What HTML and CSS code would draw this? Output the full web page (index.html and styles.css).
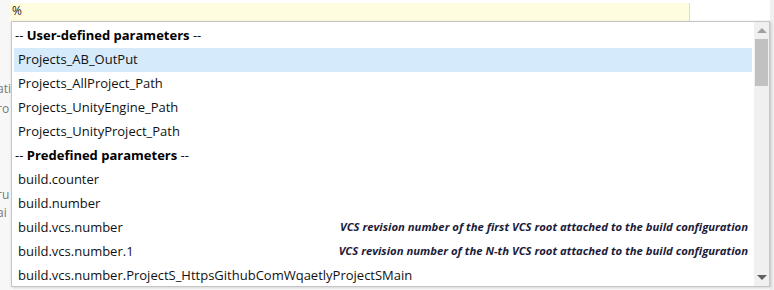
FILE: index.html
```html
<!DOCTYPE html>
<html>
<head>
<meta charset="utf-8">
<link rel="stylesheet" href="styles.css">
</head>
<body>
<div class="page">
  <div class="under">
    <div class="frag f1">ati</div>
    <div class="frag f2">ro</div>
    <div class="frag f3">ru</div>
    <div class="frag f4">ai</div>
  </div>
  <div class="inputbar">%</div>
  <div class="edge"></div>
  <div class="popup">
    <div class="list">
      <div class="row head">-- <b>User-defined parameters</b> --</div>
      <div class="row sel">Projects_AB_OutPut</div>
      <div class="row">Projects_AllProject_Path</div>
      <div class="row">Projects_UnityEngine_Path</div>
      <div class="row">Projects_UnityProject_Path</div>
      <div class="row head">-- <b>Predefined parameters</b> --</div>
      <div class="row">build.counter</div>
      <div class="row">build.number</div>
      <div class="row"><span>build.vcs.number</span><span class="desc">VCS revision number of the first VCS root attached to the build configuration</span></div>
      <div class="row"><span>build.vcs.number.1</span><span class="desc">VCS revision number of the N-th VCS root attached to the build configuration</span></div>
      <div class="row">build.vcs.number.ProjectS_HttpsGithubComWqaetlyProjectSMain</div>
    </div>
    <div class="scroll">
      <div class="arrow up"></div>
      <div class="track"><div class="thumb"></div></div>
      <div class="arrow down"></div>
    </div>
  </div>
</div>
</body>
</html>
```
FILE: styles.css
```css
* { box-sizing: border-box; }
html, body { margin: 0; padding: 0; background: #fff; }
body { width: 774px; height: 290px; overflow: hidden; font-family: "Open Sans", "Noto Sans", sans-serif; }
.page { position: relative; width: 774px; height: 290px; background: #fff; }
.under { position: absolute; left: 0; top: 0; width: 11px; height: 290px; background: #f7f7f7; overflow: hidden; }
.frag { position: absolute; left: -3px; font-size: 12px; color: #777; }
.f1 { top: 80px; }
.f2 { top: 100px; }
.f3 { top: 186px; }
.f4 { top: 204px; }
.inputbar { position: absolute; left: 9px; top: 3px; width: 681px; height: 18px; background: #fffde0; border-right: 1px solid #ddd; font-size: 12px; line-height: 15px; padding-left: 3px; color: #222; }
.edge { position: absolute; right: 0; top: 0; width: 4px; height: 290px; background: #f0f0f0; }
.popup { position: absolute; left: 11px; top: 21px; width: 759px; height: 266px; background: #fff; border: 1px solid #c6c6c6; box-shadow: 1px 1px 3px rgba(0,0,0,0.2); display: flex; padding: 2px 0 0 2px; }
.list { flex: 1; display: flex; flex-direction: column; }
.row { height: 24px; line-height: 22px; padding-bottom: 2px; font-size: 13px; color: #111; padding-left: 4px; padding-right: 4px; display: flex; justify-content: space-between; align-items: center; white-space: nowrap; }
.row.head { padding-left: 1px; justify-content: flex-start; white-space: pre; }
.row.head b { font-weight: 700; color: #000; }
.row.sel { background: #d5ebfb; }
.desc { font-size: 11.3px; font-weight: 700; font-style: italic; color: #1c1c3a; }
.scroll { width: 15px; margin-left: 2px; margin-top: -2px; background: #f0f0f0; display: flex; flex-direction: column; align-items: center; }
.arrow { width: 0; height: 0; border-left: 5px solid transparent; border-right: 5px solid transparent; }
.arrow.up { border-bottom: 5px solid #a0a0a0; margin-top: 6px; }
.arrow.down { border-top: 5px solid #606060; margin-bottom: 6px; }
.track { flex: 1; width: 100%; padding: 6px 0 0 1px; }
.thumb { width: 13px; height: 47px; background: #c1c1c1; }
```
